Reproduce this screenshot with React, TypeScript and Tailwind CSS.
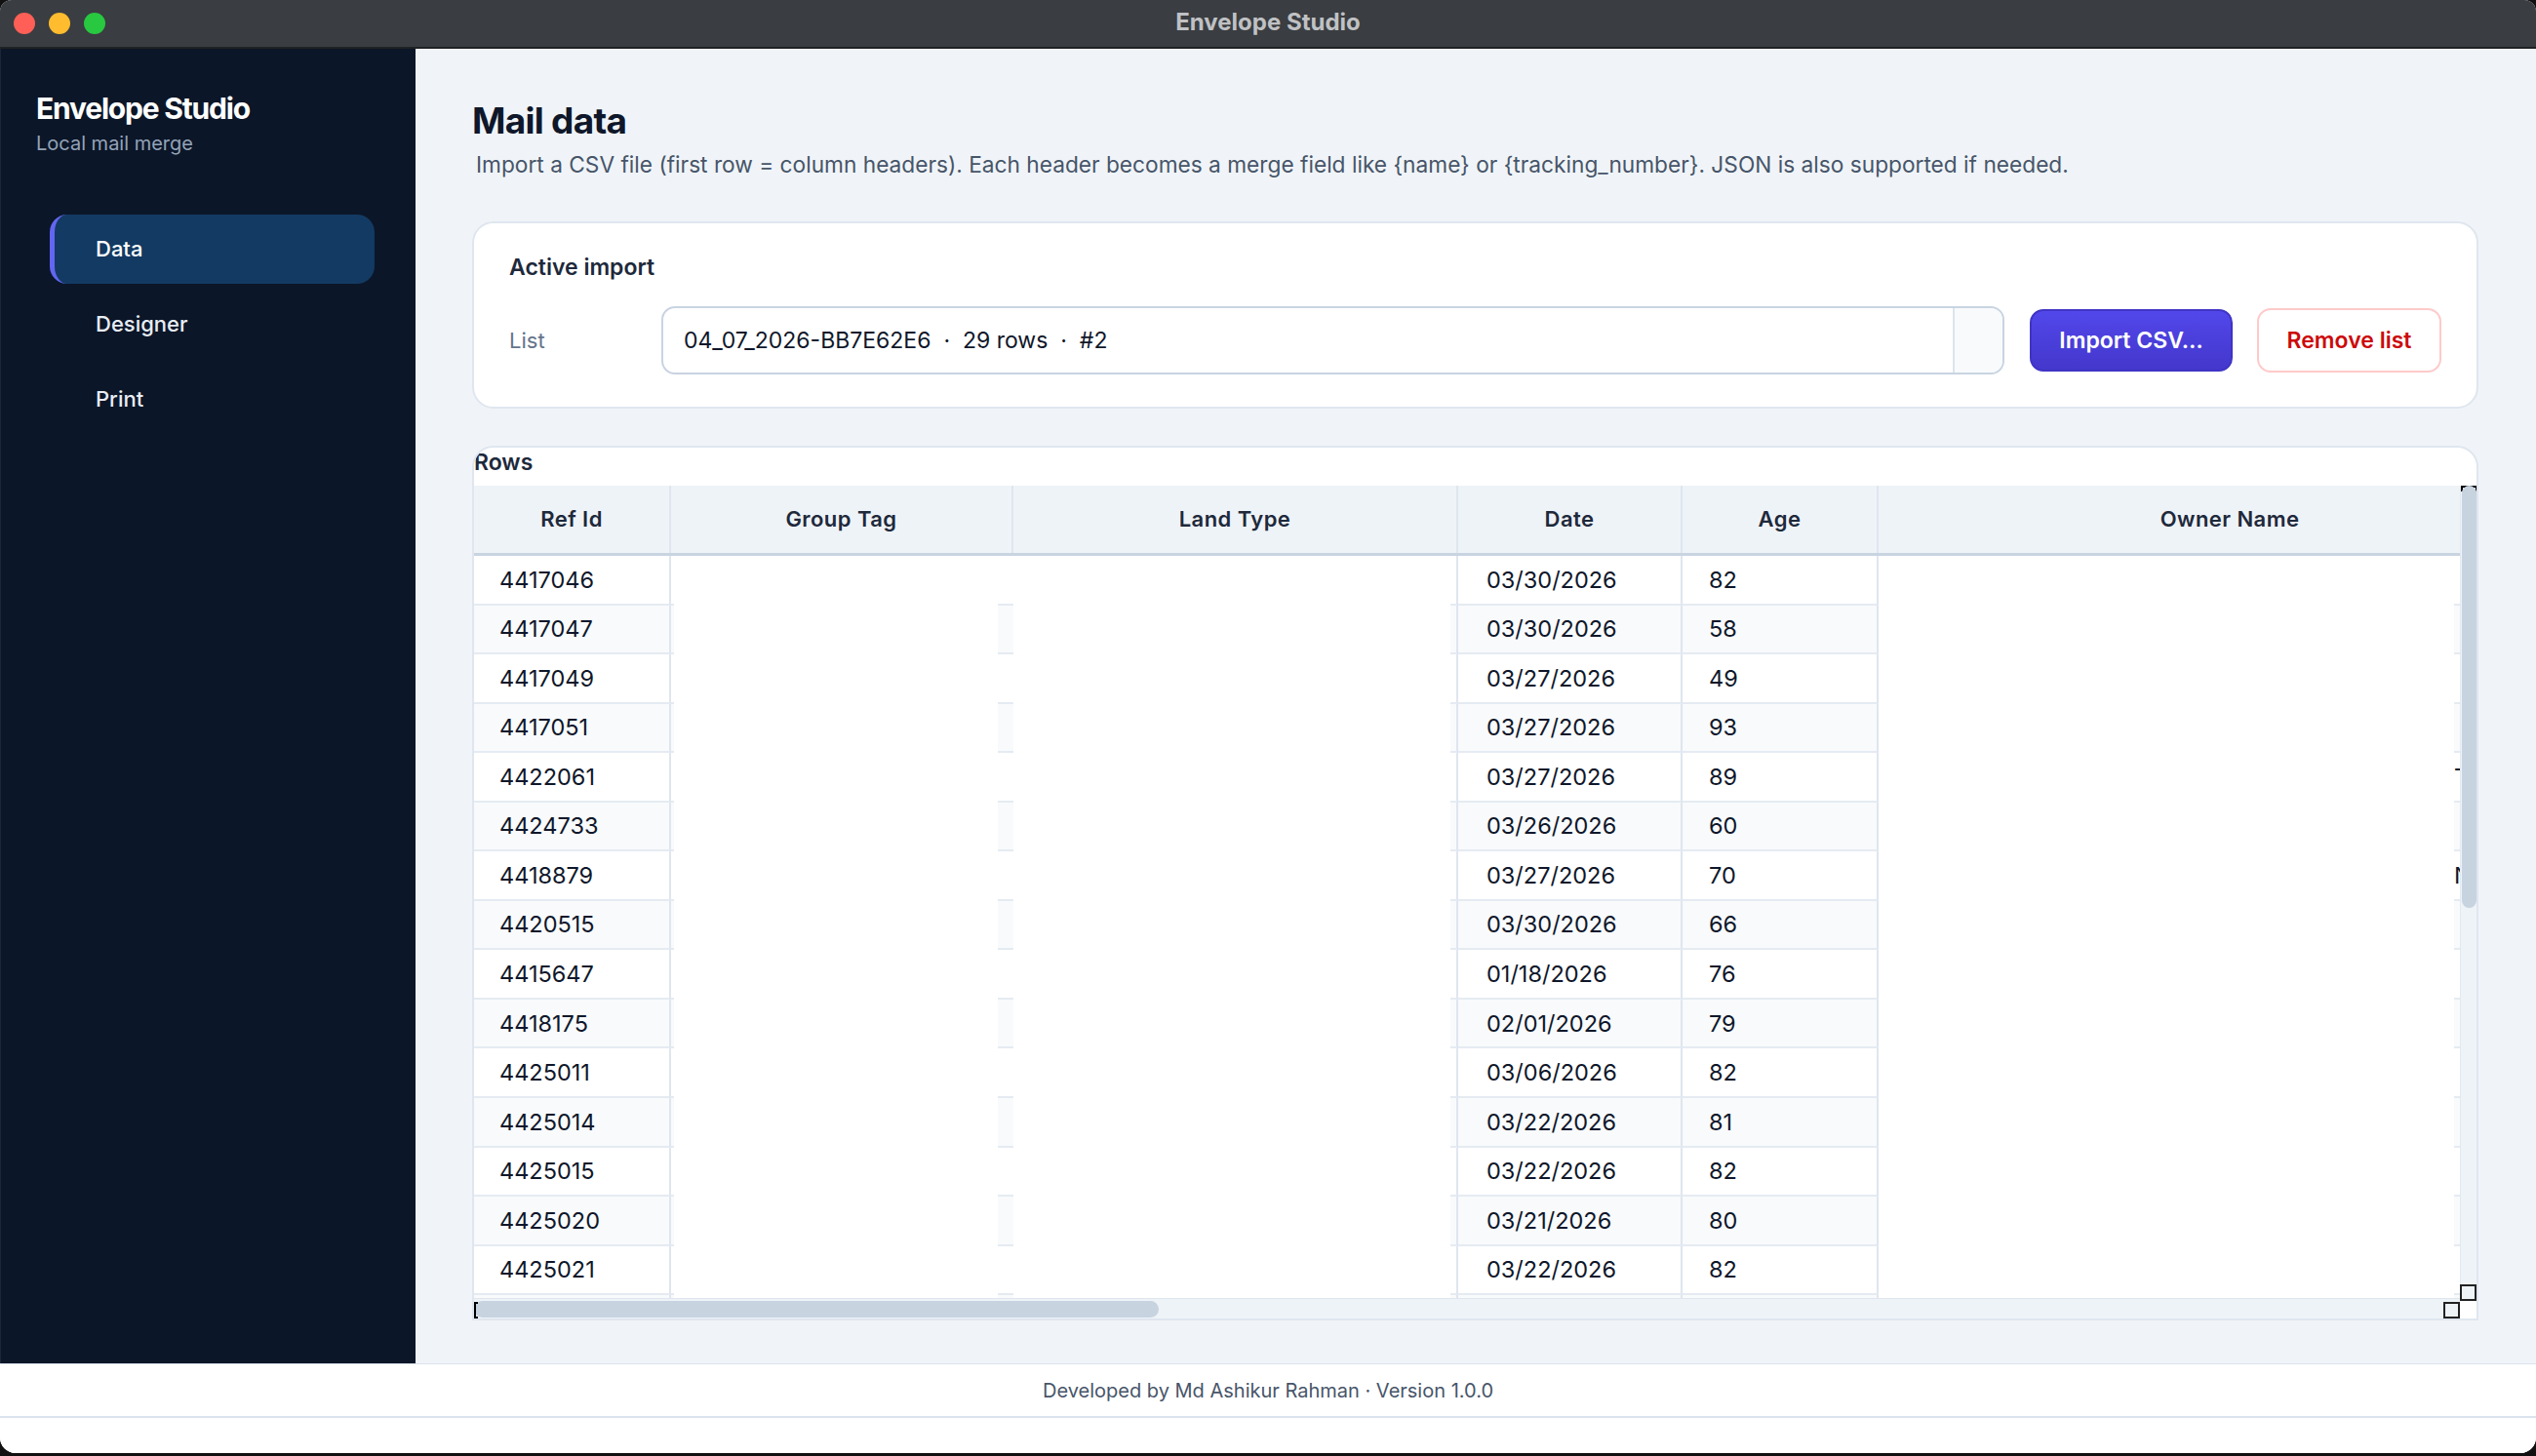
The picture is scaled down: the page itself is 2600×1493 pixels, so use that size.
import React from "react";

const rows: [string, string, string][] = [
  ["4417046", "03/30/2026", "82"],
  ["4417047", "03/30/2026", "58"],
  ["4417049", "03/27/2026", "49"],
  ["4417051", "03/27/2026", "93"],
  ["4422061", "03/27/2026", "89"],
  ["4424733", "03/26/2026", "60"],
  ["4418879", "03/27/2026", "70"],
  ["4420515", "03/30/2026", "66"],
  ["4415647", "01/18/2026", "76"],
  ["4418175", "02/01/2026", "79"],
  ["4425011", "03/06/2026", "82"],
  ["4425014", "03/22/2026", "81"],
  ["4425015", "03/22/2026", "82"],
  ["4425020", "03/21/2026", "80"],
  ["4425021", "03/22/2026", "82"],
  ["", "", ""],
];

// text peeking out at the right edge of a few rows
const trailing: Record<number, string> = { 4: "Trust", 6: "North" };

const headers = [
  { name: "Ref Id", w: "w-[202px]" },
  { name: "Group Tag", w: "w-[351px]" },
  { name: "Land Type", w: "w-[456px]" },
  { name: "Date", w: "w-[230px]" },
  { name: "Age", w: "w-[201px]" },
  { name: "Owner Name", w: "w-[722px]" },
];

function TrafficLights() {
  return (
    <div className="flex items-center gap-[14px] pl-[14px] w-[200px]">
      <span className="w-[22px] h-[22px] rounded-full bg-[#ff5f57]" />
      <span className="w-[22px] h-[22px] rounded-full bg-[#febc2e]" />
      <span className="w-[22px] h-[22px] rounded-full bg-[#28c840]" />
    </div>
  );
}

function Sidebar() {
  const items = ["Data", "Designer", "Print"];
  return (
    <aside className="w-[426px] shrink-0 bg-[#0b1628] flex flex-col border-l border-[#1c2638]">
      <div className="pl-[36px] pt-[42px]">
        <h1 className="text-[30px] leading-[38px] font-bold tracking-[-0.04em] text-white">
          Envelope Studio
        </h1>
        <p className="mt-[3px] text-[20px] leading-[28px] text-[#94a3b8]">Local mail merge</p>
      </div>
      <nav className="mt-[59px] px-[50px] flex flex-col gap-[6px] w-[433px]">
        {items.map((item, i) => (
          <div
            key={item}
            className={`h-[71px] flex items-center rounded-[18px] text-[22px] font-medium ${
              i === 0
                ? "bg-[#133a62] border-l-[5px] border-[#6366f1] pl-[42px] text-white"
                : "pl-[47px] text-[#e8edf4]"
            }`}
          >
            {item}
          </div>
        ))}
      </nav>
    </aside>
  );
}

function ActiveImport() {
  return (
    <div className="mt-[42px] h-[192px] bg-white border-2 border-[#dfe6ef] rounded-[22px] px-[36px] pt-[30px]">
      <h2 className="text-[23px] leading-[30px] font-semibold text-[#1e293b]">Active import</h2>
      <div className="mt-[25px] flex items-center">
        <span className="w-[156px] shrink-0 text-[22px] text-[#64748b]">List</span>
        <div className="flex-1 min-w-0 h-[70px] flex border-2 border-[#c9d4e1] rounded-[14px] overflow-hidden">
          <div className="flex-1 flex items-center pl-[21px] text-[23px] text-[#0f172a] whitespace-pre">
            04_07_2026-BB7E62E6  ·  29 rows  ·  #2
          </div>
          <div className="w-[51px] bg-[#f8fafc] border-l-2 border-[#dde4ed]" />
        </div>
        <button className="ml-[26px] shrink-0 w-[208px] h-[64px] rounded-[14px] border-2 border-[#3f34c4] bg-gradient-to-b from-[#5247ea] to-[#4337cc] text-white text-[23px] font-semibold">
          Import CSV…
        </button>
        <button className="ml-[25px] shrink-0 w-[189px] h-[66px] rounded-[14px] border-2 border-[#fecaca] bg-white text-[#cc0a0a] text-[23px] font-semibold">
          Remove list
        </button>
      </div>
    </div>
  );
}

function RowsTable() {
  return (
    <div className="mt-[38px] h-[897px] bg-white border-2 border-[#dfe6ef] rounded-t-[22px] flex flex-col overflow-hidden">
      <div className="h-[39px] shrink-0 text-[23px] leading-[30px] font-semibold text-[#1e293b]">Rows</div>
      <div className="relative flex-1 min-h-0 flex flex-col">
        <div className="flex-1 flex min-h-0">
          <div className="flex-1 min-w-0 overflow-hidden">
            <div className="flex h-[72px] bg-[#eef3f8] border-b-[3px] border-[#c9d4e1] w-max">
              {headers.map((h) => (
                <div
                  key={h.name}
                  className={`${h.w} shrink-0 flex items-center justify-center border-r-2 border-[#dfe6ee] text-[22px] font-semibold tracking-[0.02em] text-[#1e293b]`}
                >
                  {h.name}
                </div>
              ))}
            </div>
            {rows.map(([ref, date, age], i) => {
              const tone = i % 2 === 1 ? "bg-[#f8fafc]" : "bg-white";
              const cell = `${tone} border-b-2 border-[#e5ebf2]`;
              return (
                <div key={i} className="flex h-[50.56px] w-max text-[23.5px] text-[#0f172a]">
                  <div className={`${cell} w-[202px] border-r-2 border-r-[#dfe6ee] pl-[26px] flex items-center`}>
                    {ref}
                  </div>
                  <div className="w-[351px] flex bg-white">
                    <div className={`${cell} w-[3px]`} />
                    <div className="flex-1" />
                    <div className={`${cell} w-[16px]`} />
                  </div>
                  <div className="w-[456px] flex bg-white">
                    <div className="flex-1" />
                    <div className={`${cell} w-[8px] border-r-2 border-r-[#dfe6ee]`} />
                  </div>
                  <div className={`${cell} w-[230px] border-r-2 border-r-[#dfe6ee] pl-[29px] flex items-center`}>
                    {date}
                  </div>
                  <div className={`${cell} w-[201px] border-r-2 border-r-[#dfe6ee] pl-[27px] flex items-center`}>
                    {age}
                  </div>
                  <div className="w-[590px] bg-white" />
                  <div className={`${cell} w-[200px] flex items-center`}>{trailing[i] ?? ""}</div>
                </div>
              );
            })}
          </div>
          {/* vertical scrollbar */}
          <div className="relative w-[17px] shrink-0 bg-[#eef3f8] border-l border-[#e3e9f0]">
            <div className="absolute top-0 left-0 w-[17px] h-[6px] border-t-2 border-x-2 border-black" />
            <div className="absolute top-0 left-[1px] w-[15px] h-[433px] rounded-full bg-[#c8d3e0]" />
          </div>
        </div>
        {/* horizontal scrollbar */}
        <div className="h-[21px] shrink-0 flex">
          <div className="flex-1 bg-[#eef3f8] border-t border-[#dfe6ee] pt-[2px]">
            <div className="w-[702px] h-[17px] rounded-full bg-[#c8d3e0]" />
          </div>
          <div className="w-[17px] bg-white" />
        </div>
        <div className="absolute left-0 bottom-0 w-[4px] h-[17px] border-l-2 border-y-2 border-black" />
        <div className="absolute right-0 bottom-[18px] w-[17px] h-[17px] border-2 border-[#222] bg-[#eef3f8]" />
        <div className="absolute right-[17px] bottom-0 w-[17px] h-[17px] border-2 border-[#222] bg-[#eef3f8]" />
      </div>
    </div>
  );
}

export default function App() {
  return (
    <div className="w-[2600px] h-[1493px] bg-[#111] overflow-hidden font-['Inter','Noto_Sans',sans-serif]">
      <div className="h-[1490px] flex flex-col rounded-t-[12px] rounded-b-[16px] overflow-hidden bg-white">
        {/* title bar */}
        <div className="h-[50px] shrink-0 flex items-center bg-[#3a3d41] border-b-2 border-[#1f2123]">
          <TrafficLights />
          <div className="flex-1 text-center text-[24px] leading-[30px] font-bold text-[#bfc1c4] -mt-[3px]">
            Envelope Studio
          </div>
          <div className="w-[200px]" />
        </div>

        <div className="h-[1348px] shrink-0 flex">
          <Sidebar />
          <main className="flex-1 min-w-0 overflow-hidden bg-[#f0f4f8] pl-[58px] pr-[59px] pt-[52px]">
            <h1 className="text-[37px] leading-[44px] font-bold tracking-[-0.02em] text-[#0f172a]">Mail data</h1>
            <p className="mt-[7px] ml-[4px] text-[22.7px] leading-[32px] text-[#475569]">
              Import a CSV file (first row = column headers). Each header becomes a merge field like {"{name}"} or{" "}
              {"{tracking_number}"}. JSON is also supported if needed.
            </p>
            <ActiveImport />
            <RowsTable />
          </main>
        </div>

        <footer className="h-[54px] shrink-0 flex items-center justify-center border-t border-[#dbe3ee] text-[20px] text-[#475569]">
          Developed by Md Ashikur Rahman · Version 1.0.0
        </footer>
        <div className="flex-1 border-t-2 border-[#dbe3ee] bg-white" />
      </div>
    </div>
  );
}
